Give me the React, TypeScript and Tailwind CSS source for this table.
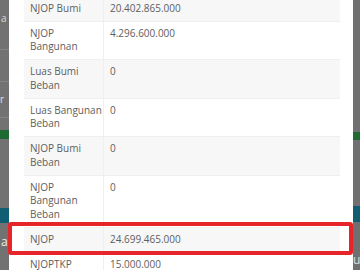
import React from "react";

const rows: { label: string[]; value: string; gray: boolean }[] = [
  { label: ["NJOP Bumi"], value: "20.402.865.000", gray: true },
  { label: ["NJOP", "Bangunan"], value: "4.296.600.000", gray: false },
  { label: ["Luas Bumi", "Beban"], value: "0", gray: true },
  { label: ["Luas Bangunan", "Beban"], value: "0", gray: false },
  { label: ["NJOP Bumi", "Beban"], value: "0", gray: true },
  { label: ["NJOP", "Bangunan", "Beban"], value: "0", gray: false },
  { label: ["NJOP"], value: "24.699.465.000", gray: true },
  { label: ["NJOPTKP"], value: "15.000.000", gray: false },
];

export default function App() {
  return (
    <div
      className="relative w-[360px] h-[270px] overflow-hidden bg-[#6f6f6f] flex"
      style={{ fontFamily: "'Open Sans', Lato, sans-serif" }}
    >
      {/* left dimmed page strip */}
      <div className="w-[9px] h-full flex flex-col bg-[#727272]">
        <div className="h-[130px] flex flex-col">
          <div className="h-[50px] border-b border-[#858585] text-[10px] text-[#d8d8d8] leading-[10px] pt-[13px] pl-[1px]">a</div>
          <div className="h-[32px] border-b border-[#858585]" />
          <div className="h-[36px] border-b border-[#858585] text-[10px] text-[#e0e0e0] leading-[10px] pt-[12px]">r</div>
        </div>
        <div className="h-[9px] bg-[#1f6a33]" />
        <div className="h-[69px]" />
        <div className="h-[15px] bg-[#0f5e72]" />
        <div className="h-[28px] text-[12px] text-[#f0f0f0] leading-[12px] pt-[13px] pl-[1px]">a</div>
      </div>

      {/* modal */}
      <div className="flex-1 h-full bg-white pl-[15px] pr-[13px]">
        <div className="mt-[-4.5px] flex flex-col text-[10px] text-[#5e5e5e] leading-[13.5px]">
          {rows.map((r, i) => (
            <div
              key={i}
              className={`grid grid-cols-[80px_1fr] border-t border-[#efefef] ${r.gray ? "bg-[#f7f7f7]" : "bg-white"}`}
            >
              <div className="py-[5.25px] px-[6px] border-r border-[#efefef] whitespace-nowrap">
                {r.label.map((l, j) => (
                  <div key={j}>{l}</div>
                ))}
              </div>
              <div className="py-[5.25px] px-[6px]">{r.value}</div>
            </div>
          ))}
        </div>
      </div>

      {/* right dimmed strip */}
      <div className="w-[7px] h-full flex flex-col bg-[#707070]">
        <div className="h-[132px]" />
        <div className="h-[8px] bg-[#1f6a33]" />
        <div className="h-[66px]" />
        <div className="h-[16px] bg-[#0f5e72]" />
        <div className="h-[48px] text-[12px] text-[#e0e0e0] leading-[12px] pt-[32px]">u</div>
      </div>

      {/* red annotation box */}
      <div className="absolute left-[8px] top-[222px] w-[345px] h-[33px] border-[4.5px] border-[#e5252a] rounded-[3px]" />
    </div>
  );
}
